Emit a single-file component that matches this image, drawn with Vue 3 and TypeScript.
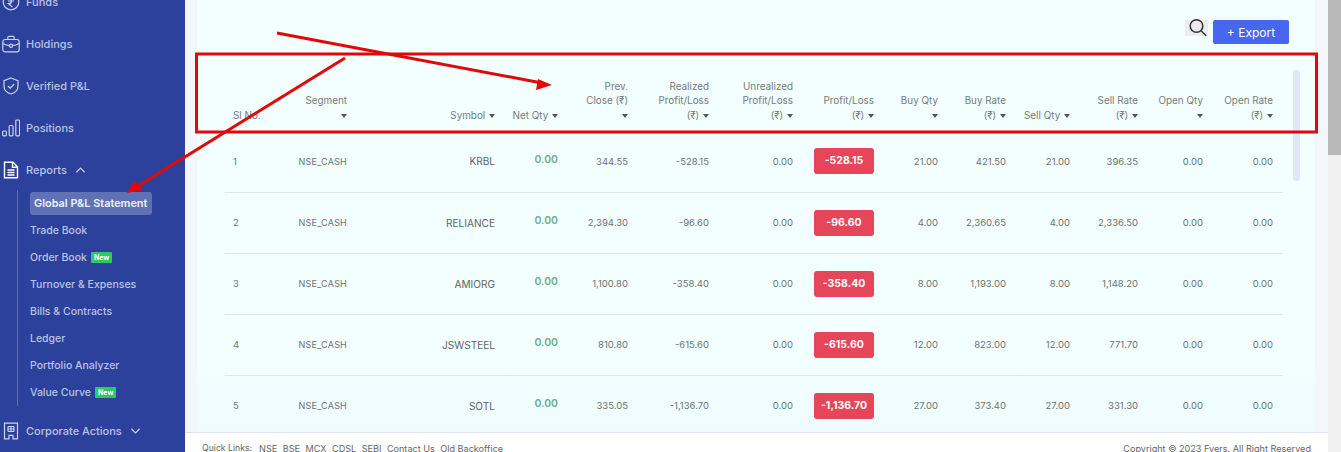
<script setup lang="ts">
interface Row {
  no: number;
  symbol: string;
  prev: string;
  realized: string;
  pl: string;
  buyQty: string;
  buyRate: string;
  sellQty: string;
  sellRate: string;
}

const rows: Row[] = [
  { no: 1, symbol: 'KRBL', prev: '344.55', realized: '-528.15', pl: '-528.15', buyQty: '21.00', buyRate: '421.50', sellQty: '21.00', sellRate: '396.35' },
  { no: 2, symbol: 'RELIANCE', prev: '2,394.30', realized: '-96.60', pl: '-96.60', buyQty: '4.00', buyRate: '2,360.65', sellQty: '4.00', sellRate: '2,336.50' },
  { no: 3, symbol: 'AMIORG', prev: '1,100.80', realized: '-358.40', pl: '-358.40', buyQty: '8.00', buyRate: '1,193.00', sellQty: '8.00', sellRate: '1,148.20' },
  { no: 4, symbol: 'JSWSTEEL', prev: '810.80', realized: '-615.60', pl: '-615.60', buyQty: '12.00', buyRate: '823.00', sellQty: '12.00', sellRate: '771.70' },
  { no: 5, symbol: 'SOTL', prev: '335.05', realized: '-1,136.70', pl: '-1,136.70', buyQty: '27.00', buyRate: '373.40', sellQty: '27.00', sellRate: '331.30' }
];

const colWidths = [65, 67, 148, 63, 70, 81, 84, 81, 64, 68, 64, 68, 65, 70];

// text of each header, the caret sits after the last line or on its own line
const headers = [
  { lines: ['Sl No.'], caret: 'none' },
  { lines: ['Segment'], caret: 'below' },
  { lines: ['Symbol'], caret: 'inline' },
  { lines: ['Net Qty'], caret: 'inline' },
  { lines: ['Prev.', 'Close (₹)'], caret: 'below' },
  { lines: ['Realized', 'Profit/Loss', '(₹)'], caret: 'inline' },
  { lines: ['Unrealized', 'Profit/Loss', '(₹)'], caret: 'inline' },
  { lines: ['Profit/Loss', '(₹)'], caret: 'inline' },
  { lines: ['Buy Qty'], caret: 'below' },
  { lines: ['Buy Rate', '(₹)'], caret: 'inline' },
  { lines: ['Sell Qty'], caret: 'inline' },
  { lines: ['Sell Rate', '(₹)'], caret: 'inline' },
  { lines: ['Open Qty'], caret: 'below' },
  { lines: ['Open Rate', '(₹)'], caret: 'inline' }
];

const subItems = [
  { label: 'Global P&L Statement', active: true },
  { label: 'Trade Book' },
  { label: 'Order Book', isNew: true },
  { label: 'Turnover & Expenses' },
  { label: 'Bills & Contracts' },
  { label: 'Ledger' },
  { label: 'Portfolio Analyzer' },
  { label: 'Value Curve', isNew: true }
];

const quickLinks = ['NSE', 'BSE', 'MCX', 'CDSL', 'SEBI', 'Contact Us', 'Old Backoffice'];
</script>

<template>
  <div class="page">
    <aside class="sidebar">
      <div class="nav-item first">
        <svg class="nav-icon" viewBox="0 0 18 18"><circle cx="9" cy="9" r="7.800" /><path d="M6 5.500h6M6 8h6M7 5.500c3 0 3.400 4.800 0 5l-.6 0 4 3.500" /></svg>
        <span>Funds</span>
      </div>
      <div class="nav-item">
        <svg class="nav-icon" viewBox="0 0 18 18"><rect x="0.800" y="4.500" width="16.400" height="12.300" rx="2.200" /><path d="M5.800 4.500V2.600C5.800 1.900 6.300 1.300 7 1.300h4c.7 0 1.200.6 1.200 1.300v1.900M0.800 8.500c3 1.500 5 2 6.600 2.200M17.200 8.500c-3 1.500-5 2-6.600 2.200" /><circle cx="9" cy="10.700" r="1.600" /></svg>
        <span>Holdings</span>
      </div>
      <div class="nav-item">
        <svg class="nav-icon" viewBox="0 0 18 18"><path d="M9 1l7 2.600v5.400c0 4-3 6.800-7 8-4-1.200-7-4-7-8V3.600z" /><path d="M6 9l2.200 2.200L12.200 7" /></svg>
        <span>Verified P&amp;L</span>
      </div>
      <div class="nav-item">
        <svg class="nav-icon" viewBox="0 0 18 18"><rect x="0.600" y="12" width="3.800" height="4.800" rx="1" /><rect x="7.200" y="6.500" width="3.800" height="10.300" rx="1" /><rect x="13.800" y="1" width="3.800" height="15.800" rx="1" /></svg>
        <span>Positions</span>
      </div>
      <div class="nav-item">
        <svg class="nav-icon bright" viewBox="0 0 18 18"><path d="M2.500 1.200h8.500l4.500 4.500v11.100h-13z" /><path d="M10.500 1.200v5h5M5.500 9h7M5.500 11.500h7M5.500 14h7" /></svg>
        <span>Reports</span>
        <svg class="chevron" viewBox="0 0 12 8"><path d="M1.500 6.500L6 2l4.500 4.500" /></svg>
      </div>
      <ul class="sub">
        <li v-for="item in subItems" :key="item.label" :class="{ active: item.active }">
          <span class="sub-label">{{ item.label }}</span>
          <span v-if="item.isNew" class="new">New</span>
        </li>
      </ul>
      <div class="nav-item">
        <svg class="nav-icon" viewBox="0 0 18 18"><path d="M2.500 1.200h13v15.600h-4.500v-3.500H7v3.500H2.500z" /><path d="M6 4.500h6M6 7h6M6 9.500h6M9 4.500v5M6 4.500v5M12 4.500v5" /></svg>
        <span>Corporate Actions</span>
        <svg class="chevron" viewBox="0 0 12 8"><path d="M1.500 1.500L6 6l4.500-4.500" /></svg>
      </div>
    </aside>

    <main class="main">
      <div class="content">
        <section class="card">
          <div class="toolbar">
            <span class="search">
              <svg viewBox="0 0 20 20"><circle cx="8.500" cy="8" r="6.300" /><path d="M13 12.800l5.200 5" /></svg>
            </span>
            <button class="export">+ Export</button>
          </div>
          <table>
            <colgroup>
              <col v-for="(w, i) in colWidths" :key="i" :style="{ width: w + 'px' }" />
            </colgroup>
            <thead>
              <tr>
                <th v-for="h in headers" :key="h.lines.join()">
                  <template v-for="(line, i) in h.lines" :key="line">
                    <div class="th-line">
                      {{ line }}
                      <i v-if="h.caret === 'inline' && i === h.lines.length - 1" class="caret"></i>
                    </div>
                  </template>
                  <div v-if="h.caret === 'below'" class="th-line"><i class="caret"></i></div>
                </th>
              </tr>
            </thead>
            <tbody>
              <tr v-for="r in rows" :key="r.no">
                <td>{{ r.no }}</td>
                <td class="segment">NSE_CASH</td>
                <td class="symbol">{{ r.symbol }}</td>
                <td class="net">0.00</td>
                <td>{{ r.prev }}</td>
                <td>{{ r.realized }}</td>
                <td>0.00</td>
                <td><span class="pill">{{ r.pl }}</span></td>
                <td>{{ r.buyQty }}</td>
                <td>{{ r.buyRate }}</td>
                <td>{{ r.sellQty }}</td>
                <td>{{ r.sellRate }}</td>
                <td>0.00</td>
                <td>0.00</td>
              </tr>
            </tbody>
          </table>
          <div class="table-scroll"></div>
        </section>
      </div>
      <footer class="footer">
        <div class="links">
          <span class="ql">Quick Links:</span>
          <span v-for="l in quickLinks" :key="l">{{ l }}</span>
        </div>
        <span class="copy">Copyright © 2023 Fyers. All Right Reserved</span>
      </footer>
    </main>

    <div class="scrollbar"><div class="thumb"></div></div>

    <!-- red annotation drawn over the screenshot -->
    <svg class="annotation" viewBox="0 0 1341 452" width="1341" height="452">
      <rect x="196.500" y="54" width="1120" height="78" fill="none" stroke="#e30808" stroke-width="3" />
      <path d="M277 33L542 83" stroke="#e30808" stroke-width="3" fill="none" />
      <path d="M552 85L538 79L536 90z" fill="#e30808" />
      <path d="M345 58L138 186" stroke="#e30808" stroke-width="3" fill="none" />
      <path d="M127 193L134 181L143 190z" fill="#e30808" />
    </svg>
  </div>
</template>

<style>
html,
body {
  margin: 0;
  overflow: hidden;
}
</style>

<style scoped>
.page {
  position: relative;
  display: flex;
  width: 1341px;
  height: 452px;
  overflow: hidden;
  font-family: Inter, "Liberation Sans", sans-serif;
  background: #f4f6fe;
}

.sidebar {
  flex: 0 0 185px;
  background: #2b419b;
  color: #b9c3e6;
  font-size: 11px;
  font-weight: 500;
}

.nav-item {
  display: flex;
  align-items: center;
  height: 42px;
  padding-left: 2px;
}

.nav-item.first {
  margin-top: -19px;
}

.nav-icon {
  flex: 0 0 auto;
  width: 18px;
  height: 18px;
  margin-right: 6px;
  fill: none;
  stroke: #cbd3f0;
  stroke-width: 1.200;
}

.nav-icon.bright {
  stroke: #fff;
  stroke-width: 1.400;
}

.chevron {
  width: 11px;
  height: 8px;
  margin-left: 8px;
  fill: none;
  stroke: #c8d0ee;
  stroke-width: 1.300;
}

.sub {
  list-style: none;
  margin: -1px 0 4px 17px;
  padding: 0 0 0 12px;
  border-left: 1px solid #5c6fb3;
  font-size: 10.500px;
}

.sub li {
  display: flex;
  align-items: center;
  height: 27px;
}

.sub li.active {
  color: #eef1fb;
  font-size: 10.900px;
  font-weight: 600;
}

.sub li.active .sub-label {
  display: block;
  width: 122px;
  height: 23px;
  line-height: 23px;
  padding-left: 4px;
  box-sizing: border-box;
  background: #5f72b5;
  border-radius: 3px;
  white-space: nowrap;
}

.new {
  margin-left: 4px;
  padding: 0 3px;
  height: 11px;
  line-height: 11px;
  font-size: 7px;
  font-weight: 700;
  color: #fff;
  background: #2ec866;
  border-radius: 1px;
}

.main {
  flex: 1;
  min-width: 0;
  display: flex;
  flex-direction: column;
}

.content {
  flex: 1;
  min-height: 0;
  padding: 0 13px 0 12px;
  overflow: hidden;
  border-bottom: 1px solid #dfe3ea;
}

.card {
  position: relative;
  height: 100%;
  padding: 0 32px 0 28px;
  background: linear-gradient(#f3fffe 85%, #eefcfe);
}

.toolbar {
  display: flex;
  justify-content: flex-end;
  align-items: flex-start;
  height: 70px;
  padding-top: 20px;
  box-sizing: border-box;
  margin-right: -6px;
}

.search {
  display: block;
  width: 23px;
  height: 16px;
  margin-right: 5px;
  background: #ececec;
}

.search svg {
  display: block;
  width: 20px;
  height: 20px;
  margin: -2px 0 0 3px;
  fill: none;
  stroke: #333;
  stroke-width: 1.500;
}

.export {
  width: 76px;
  height: 24px;
  padding: 0;
  border: 0;
  border-radius: 2px;
  background: #4767ee;
  color: #fff;
  font-family: inherit;
  font-size: 12px;
}

table {
  width: 1058px;
  table-layout: fixed;
  border-collapse: collapse;
  color: #6d7272;
  font-size: 9.500px;
}

th {
  height: 61px;
  padding: 0 10px 9px 0;
  box-sizing: border-box;
  vertical-align: bottom;
  text-align: right;
  font-size: 9.900px;
  font-weight: 400;
  color: #767b7b;
}

th:first-child,
td:first-child {
  padding-left: 8px;
  text-align: left;
}

.th-line {
  height: 14.500px;
  line-height: 14.500px;
  white-space: nowrap;
}

.caret {
  display: inline-block;
  width: 0;
  height: 0;
  margin-left: 1px;
  vertical-align: middle;
  border-left: 3.500px solid transparent;
  border-right: 3.500px solid transparent;
  border-top: 4px solid #555;
}

td {
  height: 61px;
  padding: 0 10px 0 0;
  box-sizing: border-box;
  text-align: right;
  white-space: nowrap;
  border-bottom: 1px solid #dbe7e9;
}

.segment {
  font-size: 9px;
  letter-spacing: 0.200px;
}

.symbol {
  font-size: 10.100px;
  color: #5f6464;
}

.net {
  padding-bottom: 4px;
  color: #72ad92;
  font-size: 10.500px;
  font-weight: 600;
}

.pill {
  display: inline-block;
  width: 60px;
  height: 26px;
  line-height: 26px;
  border-radius: 3px;
  text-align: center;
  background: #e7455a;
  color: #fff;
  font-size: 10.500px;
  font-weight: 700;
}

.table-scroll {
  position: absolute;
  top: 70px;
  right: 15px;
  width: 7px;
  height: 111px;
  border-radius: 3px;
  background: #e0e7fb;
}

.footer {
  flex: 0 0 19px;
  display: flex;
  justify-content: space-between;
  align-items: flex-start;
  padding: 10px 17px 0 17px;
  box-sizing: border-box;
  background: #fff;
  color: #666;
  font-size: 9.100px;
  overflow: hidden;
}

.links {
  display: flex;
  gap: 5.500px;
  line-height: 12px;
}

.ql {
  margin-top: -1px;
  margin-right: 1.500px;
  font-size: 8.700px;
}

.copy {
  line-height: 12px;
}

.scrollbar {
  flex: 0 0 13px;
  background: #f1f1f1;
}

.thumb {
  height: 155px;
  background: #b9b9b9;
}

.annotation {
  position: absolute;
  left: 0;
  top: 0;
  pointer-events: none;
}
</style>
